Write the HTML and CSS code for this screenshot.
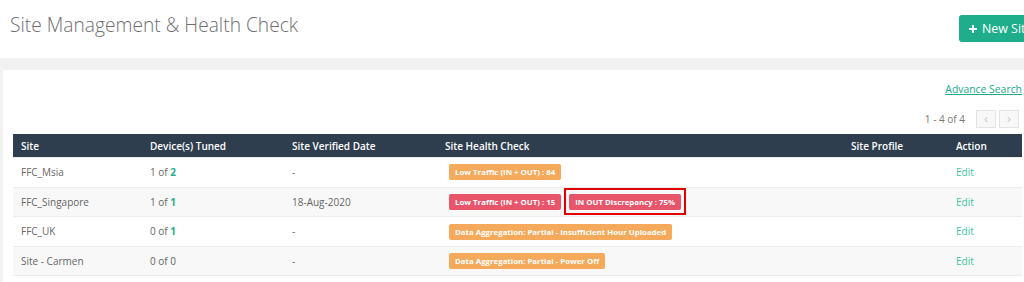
FILE: index.html
```html
<!DOCTYPE html>
<html>
<head>
<meta charset="utf-8">
<link rel="stylesheet" href="styles.css">
</head>
<body>
<div class="page">
  <header class="top">
    <h1 class="title">Site Management &amp; Health Check</h1>
    <button class="btn-new"><svg class="plus" viewBox="0 0 8 8" width="8" height="8"><path d="M4 0v8M0 4h8" stroke="#fff" stroke-width="2"/></svg>New Site</button>
  </header>
  <div class="band">
    <section class="panel">
      <div class="tools">
        <a class="adv" href="#">Advance Search</a>
      </div>
      <div class="pager">
        <span class="count">1 - 4 of 4</span>
        <span class="pbtn">&#8249;</span>
        <span class="pbtn">&#8250;</span>
      </div>
      <table class="grid">
        <thead>
          <tr>
            <th class="c-site">Site</th>
            <th class="c-dev">Device(s) Tuned</th>
            <th class="c-date">Site Verified Date</th>
            <th class="c-health">Site Health Check</th>
            <th class="c-prof">Site Profile</th>
            <th class="c-act">Action</th>
          </tr>
        </thead>
        <tbody>
          <tr>
            <td>FFC_Msia</td>
            <td>1 of <b class="num">2</b></td>
            <td>-</td>
            <td><span class="badge warn">Low Traffic (IN + OUT) : 84</span></td>
            <td></td>
            <td><a class="edit" href="#">Edit</a></td>
          </tr>
          <tr>
            <td>FFC_Singapore</td>
            <td>1 of <b class="num">1</b></td>
            <td>18-Aug-2020</td>
            <td><span class="badge bad">Low Traffic (IN + OUT) : 15</span><span class="hl"><span class="badge bad inner">IN OUT Discrepancy : 75%</span></span></td>
            <td></td>
            <td><a class="edit" href="#">Edit</a></td>
          </tr>
          <tr>
            <td>FFC_UK</td>
            <td>0 of <b class="num">1</b></td>
            <td>-</td>
            <td><span class="badge warn">Data Aggregation: Partial - Insufficient Hour Uploaded</span></td>
            <td></td>
            <td><a class="edit" href="#">Edit</a></td>
          </tr>
          <tr>
            <td>Site - Carmen</td>
            <td>0 of 0</td>
            <td>-</td>
            <td><span class="badge warn">Data Aggregation: Partial - Power Off</span></td>
            <td></td>
            <td><a class="edit" href="#">Edit</a></td>
          </tr>
        </tbody>
      </table>
    </section>
  </div>
</div>
</body>
</html>
```

FILE: styles.css
```css
html, body {
  margin: 0;
  padding: 0;
  overflow: hidden;
  background: #fff;
}
body {
  font-family: "Open Sans", "Liberation Sans", sans-serif;
  color: #555;
}
.page {
  width: 1040px;
}
.top {
  display: flex;
  align-items: flex-start;
  justify-content: space-between;
  height: 58px;
  padding: 0 0 0 10px;
  box-sizing: border-box;
}
.title {
  margin: 11px 0 0;
  font-size: 19.2px;
  font-weight: 300;
  color: #6f6f6f;
  line-height: 28px;
}
.btn-new {
  margin-top: 15px;
  height: 27px;
  width: 81px;
  background: #1fae8b;
  border: 0;
  border-radius: 3px;
  color: #fff;
  font-family: "Open Sans", "Liberation Sans", sans-serif;
  font-size: 12.4px;
  padding: 0 0 0 10px;
  display: flex;
  align-items: center;
  gap: 5px;
  white-space: nowrap;
}
.plus { display: block; }
.band {
  background: #f1f1f1;
  padding: 12px 0 0 3px;
  height: 212px;
}
.panel {
  background: #fff;
  height: 100%;
  padding: 0 10px 0 10px;
  margin-right: 8px;
}
.tools {
  display: flex;
  justify-content: flex-end;
  padding-top: 12px;
  height: 20px;
}
.adv {
  color: #22a88a;
  font-size: 10.4px;
  text-decoration: underline;
}
.pager {
  display: flex;
  justify-content: flex-end;
  align-items: center;
  gap: 3px;
  margin-top: 7px;
  height: 19px;
  padding-right: 3px;
}
.count {
  font-size: 10px;
  color: #777;
  margin-right: 8px;
}
.pbtn {
  width: 18px;
  height: 16px;
  border: 1px solid #e3e3e3;
  background: #f8f8f8;
  color: #c8c8c8;
  font-size: 13px;
  line-height: 15px;
  text-align: center;
}
.grid {
  margin-top: 6px;
  width: 100%;
  border-collapse: collapse;
  font-size: 10px;
}
.grid th {
  background: #2e3e4e;
  color: #fff;
  font-weight: 600;
  text-align: left;
  height: 23px;
  padding: 0 8px;
}
.grid td {
  height: 28.6px;
  padding: 0 8px;
  border-top: 1px solid #ececec;
  color: #666;
}
.grid tbody tr:nth-child(even) td { background: #f8f8f8; }
.grid tbody tr:last-child td { border-bottom: 1px solid #ececec; }
.c-site { width: 113px; }
.c-dev { width: 126px; }
.c-date { width: 137px; }
.c-health { width: 390px; }
.c-prof { width: 89px; }
.num { color: #1fae8b; font-weight: 700; }
.badge {
  display: inline-block;
  font-size: 7.85px;
  font-weight: 700;
  color: #fff;
  padding: 0 6px;
  margin-left: 4px;
  height: 16px;
  line-height: 16px;
  border-radius: 2px;
  vertical-align: middle;
}
.badge.inner { margin-left: 0; }
.warn { background: #f5a95b; }
.bad { background: #e8546a; }
.hl {
  display: inline-block;
  border: 2px solid #e00000;
  padding: 4px 3px 3px;
  margin-left: 3px;
  vertical-align: middle;
  line-height: 0;
}
.edit {
  color: #3ec49f;
  text-decoration: none;
}
```
